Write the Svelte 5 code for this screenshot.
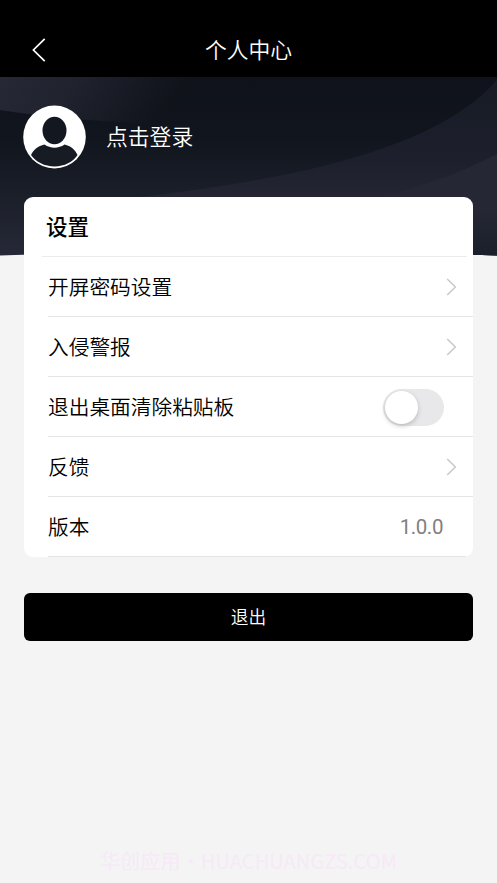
<script lang="ts">
	type Row = { label: string; kind: 'link' | 'switch' | 'value'; value?: string };

	const rows: Row[] = [
		{ label: '开屏密码设置', kind: 'link' },
		{ label: '入侵警报', kind: 'link' },
		{ label: '退出桌面清除粘贴板', kind: 'switch' },
		{ label: '反馈', kind: 'link' },
		{ label: '版本', kind: 'value', value: '1.0.0' }
	];

	let clearOnExit = $state(false);
</script>

<div class="page">
	<header class="navbar">
		<button class="back" aria-label="返回">
			<svg width="14" height="24" viewBox="0 0 14 24">
				<path d="M12.7 0.8 L1.4 12 L12.7 23.2" fill="none" stroke="#fff" stroke-width="1.7" />
			</svg>
		</button>
		<h1>个人中心</h1>
	</header>

	<main class="content">
		<svg class="banner" viewBox="0 0 497 179" aria-hidden="true">
			<defs>
				<linearGradient id="base" x1="0" y1="0" x2="0" y2="1">
					<stop offset="0" stop-color="#0f121a" />
					<stop offset="0.35" stop-color="#11151d" />
					<stop offset="0.7" stop-color="#1c202b" />
					<stop offset="1" stop-color="#262837" />
				</linearGradient>
				<linearGradient id="corner" x1="0" y1="0" x2="1" y2="0.15">
					<stop offset="0" stop-color="#272836" />
					<stop offset="0.4" stop-color="#20222e" />
					<stop offset="1" stop-color="#0f1219" />
				</linearGradient>
				<linearGradient id="wave" x1="0" y1="0" x2="0" y2="1">
					<stop offset="0" stop-color="#161b26" />
					<stop offset="0.45" stop-color="#1d202c" />
					<stop offset="0.65" stop-color="#232532" />
					<stop offset="1" stop-color="#252735" />
				</linearGradient>
				<linearGradient id="front" x1="0" y1="0" x2="0" y2="1">
					<stop offset="0" stop-color="#262734" />
					<stop offset="0.55" stop-color="#252734" />
					<stop offset="1" stop-color="#1a1f2b" />
				</linearGradient>
				<clipPath id="arc">
					<path d="M0 0 H497 V178.4 Q248 170 0 178.4 Z" />
				</clipPath>
			</defs>
			<g clip-path="url(#arc)">
				<rect width="497" height="179" fill="url(#base)" />
				<path d="M0 0 H190 Q170 35 145 46.5 Q55 42 0 33 Z" fill="url(#corner)" />
				<path d="M497 3 C440 68 310 102 120 122 V179 H497 Z" fill="url(#wave)" />
				<path d="M497 77 Q450 102 384 120 V179 H497 Z" fill="url(#front)" />
			</g>
		</svg>

		<section class="profile">
			<svg class="avatar" width="63" height="64" viewBox="0 0 63 64">
				<ellipse cx="31.5" cy="32" rx="31.3" ry="31.5" fill="#fff" />
				<ellipse cx="31.5" cy="25.5" rx="12" ry="13.7" fill="#121720" />
				<path
					d="M21.5 39.5 C15 41 10.5 44.5 8 50 C13 57 21.5 61.4 31.5 61.4 S50 57 54.5 50 C52 44.5 48 41 41.5 39.5 C35.5 43.7 27.5 43.7 21.5 39.5 Z"
					fill="#161b24"
				/>
			</svg>
			<span class="login">点击登录</span>
		</section>

		<section class="card">
			<h2>设置</h2>
			<ul>
				{#each rows as row}
					<li>
						<span class="label">{row.label}</span>
						{#if row.kind === 'link'}
							<svg class="chevron" width="11" height="18" viewBox="0 0 11 18">
								<path d="M1.2 0.9 L9.4 9 L1.2 17.1" fill="none" stroke="#c7c7c9" stroke-width="1.4" />
							</svg>
						{:else if row.kind === 'switch'}
							<button
								class="switch"
								class:on={clearOnExit}
								role="switch"
								aria-checked={clearOnExit}
								aria-label={row.label}
								onclick={() => (clearOnExit = !clearOnExit)}
							></button>
						{:else}
							<span class="value">{row.value}</span>
						{/if}
					</li>
				{/each}
			</ul>
		</section>

		<button class="logout">退出</button>
	</main>

	<footer>华创应用・HUACHUANGZS.COM</footer>
</div>

<style>
	:global(body) {
		background: #f4f4f4;
	}

	.page {
		display: flex;
		flex-direction: column;
		height: 883px;
		overflow: hidden;
		box-sizing: border-box;
		background: #f4f4f4;
		font-family: 'Noto Sans CJK SC', sans-serif;
		font-weight: 350;
		color: #000;
	}

	button {
		border: none;
		padding: 0;
		font: inherit;
		cursor: pointer;
	}

	.navbar {
		display: grid;
		grid-template-columns: 80px 1fr 80px;
		align-items: center;
		flex: none;
		height: 77px;
		padding-top: 23px;
		box-sizing: border-box;
		background: #000;
		color: #fff;
	}

	.back {
		display: flex;
		margin-left: 32px;
		background: none;
	}

	h1 {
		margin: 0;
		padding-bottom: 3px;
		font-size: 21.8px;
		font-weight: 350;
		line-height: 51px;
		text-align: center;
	}

	.content {
		position: relative;
		flex: 1;
		padding: 0 24px;
	}

	.banner {
		position: absolute;
		top: 0;
		left: 0;
		width: 100%;
		height: 179px;
	}

	.profile {
		position: relative;
		display: flex;
		align-items: center;
		gap: 20px;
		height: 120px;
		margin-left: -1px;
		color: #fff;
	}

	.login {
		padding-bottom: 3px;
		font-size: 21.8px;
	}

	.card {
		position: relative;
		width: 449px;
		height: 360px;
		overflow: hidden;
		border-radius: 9px;
		background: #fff;
	}

	h2 {
		height: 60px;
		margin: 0 6px 0 18px;
		padding-left: 4px;
		box-sizing: border-box;
		border-bottom: 1px solid #ececec;
		font-size: 21.5px;
		font-weight: 500;
		line-height: 58px;
	}

	ul {
		margin: 0;
		padding: 0 0 0 24px;
		list-style: none;
	}

	li {
		display: flex;
		align-items: center;
		justify-content: space-between;
		height: 60px;
		box-sizing: border-box;
		border-bottom: 1px solid #e5e5e5;
		font-size: 20.7px;
	}

	.label {
		padding-bottom: 2px;
	}

	.chevron {
		margin-right: 16px;
	}

	.switch {
		width: 61px;
		height: 37px;
		margin: 1px 29px 0 0;
		padding: 2px;
		border-radius: 19px;
		background: #e8e8ea;
	}

	.switch::before {
		content: '';
		display: block;
		width: 33px;
		height: 33px;
		border-radius: 50%;
		background: #fff;
		box-shadow: 0 2px 5px rgba(0, 0, 0, 0.2);
		transition: transform 0.2s ease;
	}

	.switch.on {
		background: #000;
	}

	.switch.on::before {
		transform: translateX(24px);
	}

	.value {
		margin-right: 30px;
		font-family: Roboto, sans-serif;
		font-size: 20.5px;
		font-weight: 400;
		letter-spacing: -0.4px;
		color: #808080;
	}

	.logout {
		display: block;
		width: 449px;
		height: 48px;
		margin-top: 35.5px;
		padding-bottom: 2px;
		border-radius: 6px;
		background: #000;
		color: #fff;
		font-size: 17.7px;
	}

	footer {
		flex: none;
		height: 44px;
		font-size: 20.2px;
		font-weight: 400;
		line-height: 43px;
		text-align: center;
		color: #f7e9f7;
	}
</style>
